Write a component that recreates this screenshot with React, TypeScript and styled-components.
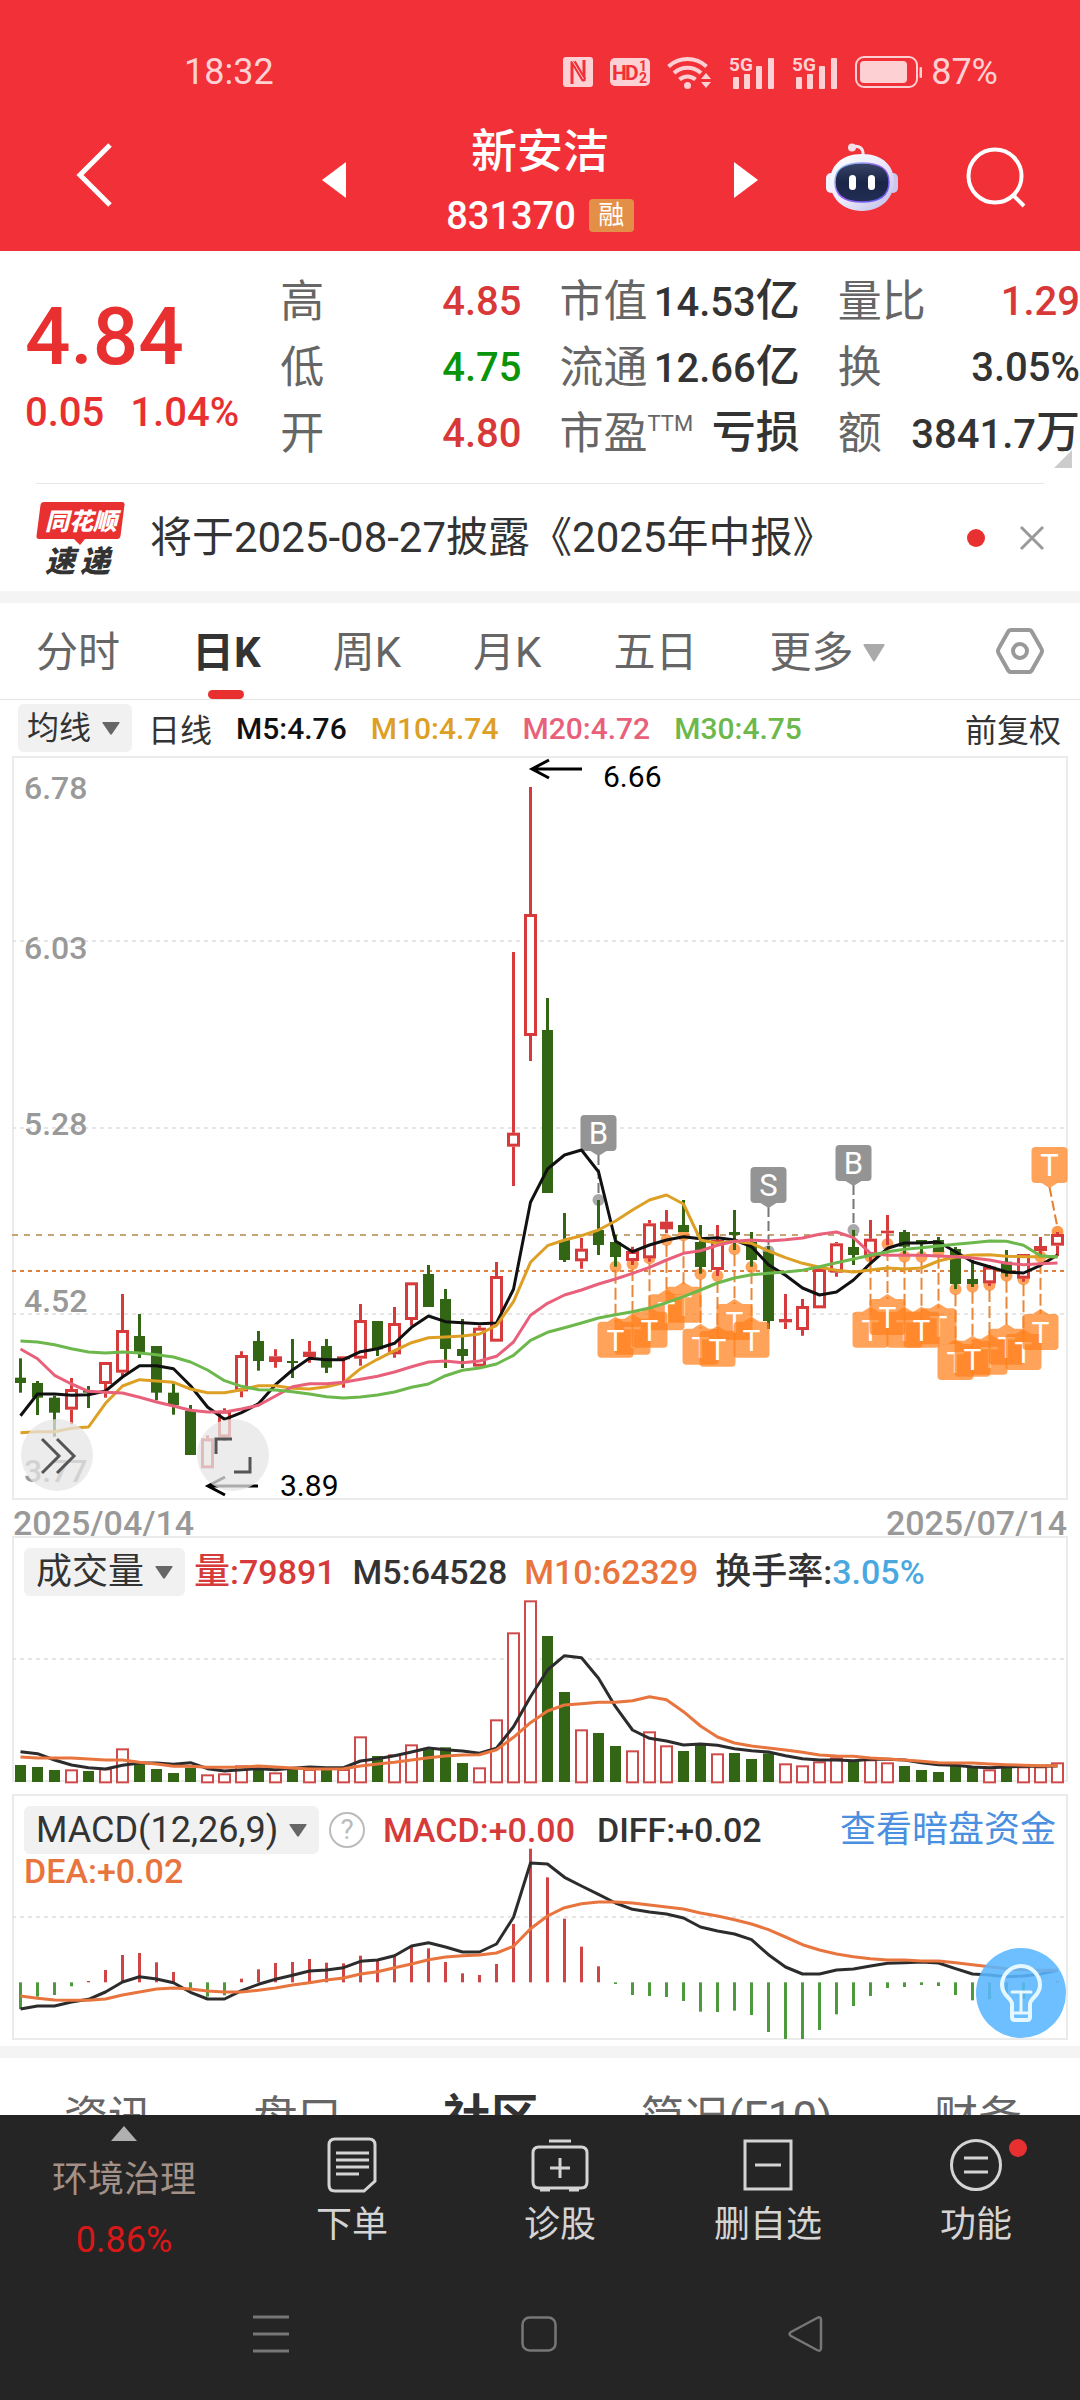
import React from "react";
import styled, { createGlobalStyle, css } from "styled-components";

const GlobalStyle = createGlobalStyle`
  *, *::before, *::after { box-sizing: border-box; }
  body {
    margin: 0;
    background: #fff;
    color: #333;
    font-family: Roboto, "Noto Sans CJK SC", sans-serif;
  }
  button, select {
    margin: 0;
    padding: 0;
    border: 0;
    background: none;
    color: inherit;
    font: inherit;
  }
  button { cursor: pointer; }
  a { color: inherit; text-decoration: none; }
  svg { display: block; overflow: visible; }
  dl, dt, dd, p, h1 { margin: 0; }
`;

/* ---------- palette ---------- */

const RED = "#e83030";
const CANDLE_RED = "#d63a3a";
const GREEN = "#326614";
const GOLD = "#dd9f24";
const PINK = "#e8607a";
const LIME = "#6cb84c";
const ORANGE = "#e8743e";
const MARK = "#ff801b";
const GREY = "#949494";

/* ---------- page frame ---------- */

const Screen = styled.div`
  display: flex;
  flex-direction: column;
  height: 100vh;
  overflow: hidden;
`;

const Main = styled.main`
  flex: 1;
  min-height: 0;
  overflow: hidden;
`;

const Band = styled.div`
  height: 12px;
  background: #f4f4f4;
`;

/* ---------- header ---------- */

const Header = styled.header`
  background: #f23038;
  color: #fff;
`;

const StatusBar = styled.div`
  display: flex;
  align-items: center;
  justify-content: space-between;
  height: 108px;
  padding: 36px 82px 0 184px;
  color: #fdd0d3;
  font-size: 36px;
  line-height: 36px;
`;

const StatusIcons = styled.div`
  display: flex;
  align-items: center;
  gap: 17px;
`;

const BatteryGroup = styled.div`
  display: flex;
  align-items: center;
  gap: 8px;
`;

const TitleBar = styled.div`
  display: grid;
  grid-template-columns: 1fr 436px 1fr;
  align-items: center;
  height: 143px;
`;

const TitleLeft = styled.div`
  padding: 0 0 6px 76px;
`;

const TitleRight = styled.div`
  display: flex;
  align-items: center;
  justify-content: flex-end;
  gap: 68px;
  padding: 0 54px 6px 0;
`;

const TitleCenter = styled.div`
  display: flex;
  align-items: center;
  justify-content: space-between;
`;

const TitleText = styled.div`
  padding-top: 6px;
`;

const StockName = styled.h1`
  font-size: 46px;
  font-weight: 500;
  line-height: 66px;
  text-align: center;
`;

const StockCode = styled.div`
  display: flex;
  align-items: center;
  gap: 13px;
  font-size: 38px;
  font-weight: 500;
  line-height: 64px;
`;

const MarginTag = styled.span`
  width: 45px;
  height: 33px;
  border-radius: 4px;
  background: #e48f48;
  font-size: 26px;
  font-weight: 400;
  line-height: 32px;
  text-align: center;
`;

/* ---------- quote ---------- */

const Quote = styled.section`
  position: relative;
  display: grid;
  grid-template-columns: 217fr 241fr 240fr 242fr;
  column-gap: 38px;
  padding: 18px 0 16px 25px;
`;

const PriceCol = styled.div`
  padding-top: 26px;
  color: ${RED};
  font-weight: 500;
  white-space: nowrap;
`;

const Price = styled.div`
  font-size: 80px;
  line-height: 84px;
`;

const Change = styled.div`
  display: flex;
  gap: 26px;
  padding-top: 10px;
  font-size: 40px;
  line-height: 48px;
`;

const Stats = styled.dl`
  display: flex;
  flex-direction: column;
`;

const Stat = styled.div`
  display: flex;
  align-items: center;
  justify-content: space-between;
  height: 66px;
  white-space: nowrap;
`;

const StatName = styled.dt`
  color: #666;
  font-size: 44px;
  line-height: 66px;
`;

const Sup = styled.sup`
  font-size: 22px;
  line-height: 22px;
  vertical-align: 18px;
`;

const StatValue = styled.dd<{ $color?: string }>`
  color: ${(p) => p.$color ?? "#333"};
  font-size: 40px;
  font-weight: 500;
  line-height: 66px;
`;

const Unit = styled.span`
  font-size: 44px;
`;

const Corner = styled.svg`
  position: absolute;
  right: 8px;
  bottom: 15px;
`;

/* ---------- news strip ---------- */

const News = styled.section`
  display: flex;
  align-items: center;
  height: 108px;
  margin: 0 36px;
  border-top: 1px solid #e8e8e8;
`;

const NewsText = styled.a`
  flex: 1;
  padding-left: 24px;
  font-size: 42px;
  line-height: 60px;
  white-space: nowrap;
`;

const Dot = styled.span`
  width: 18px;
  height: 18px;
  border-radius: 50%;
  background: ${RED};
`;

const CloseButton = styled.button`
  margin-left: 35px;
`;

/* ---------- tabs ---------- */

const TabRow = styled.nav`
  display: flex;
  align-items: center;
  gap: 72px;
  height: 97px;
  padding: 0 36px;
  border-bottom: 1px solid #e4e4e4;
`;

const Tab = styled.button<{ $active?: boolean }>`
  position: relative;
  display: flex;
  align-items: center;
  gap: 10px;
  height: 96px;
  padding-top: 4px;
  color: #666;
  font-size: 42px;
  line-height: 60px;
  ${(p) =>
    p.$active &&
    css`
      color: #333;
      font-weight: 700;
      &::after {
        content: "";
        position: absolute;
        left: 50%;
        bottom: 0;
        width: 36px;
        height: 9px;
        margin-left: -18px;
        border-radius: 5px;
        background: ${RED};
      }
    `}
`;

const SettingsButton = styled.button`
  margin-left: auto;
`;

/* ---------- indicator rows ---------- */

const Readout = styled.span<{ $color?: string }>`
  color: ${(p) => p.$color ?? "#333"};
  white-space: nowrap;
`;

const MaRow = styled.div`
  display: flex;
  align-items: center;
  gap: 24px;
  height: 56px;
  padding: 0 19px 0 18px;
  font-size: 30px;
  font-weight: 500;
`;

const MaText = styled.span`
  font-size: 32px;
  font-weight: 400;
`;

const Adjust = styled.button`
  margin-left: auto;
  font-size: 32px;
  font-weight: 400;
`;

const Picker = styled.label<{ $size: number }>`
  display: flex;
  align-items: center;
  gap: 10px;
  height: 48px;
  padding: 0 12px 0 ${(p) => (p.$size === 32 ? 9 : 12)}px;
  margin-right: -8px;
  border-radius: 6px;
  background: #f1f1f1;
  font-size: ${(p) => p.$size}px;
  font-weight: 400;
  select {
    appearance: none;
    line-height: 48px;
  }
`;

/* ---------- chart panels ---------- */

const Panel = styled.section`
  position: relative;
  display: grid;
  margin: 0 12px;
  > * { grid-area: 1 / 1; }
`;

const PanelChart = styled.svg`
  width: 100%;
  height: auto;
  font-family: Roboto, "Noto Sans CJK SC", sans-serif;
`;

const PanelHead = styled.div<{ $gap: number }>`
  z-index: 1;
  display: flex;
  flex-wrap: wrap;
  align-content: flex-start;
  align-items: center;
  column-gap: ${(p) => p.$gap}px;
  padding: 12px 12px 0;
  font-size: 34px;
  line-height: 34px;
  font-weight: 500;
`;

const Cn = styled.span`
  font-size: 36px;
`;

const DarkLink = styled.a`
  margin-left: auto;
  color: #4a8fe0;
  font-size: 36px;
  font-weight: 400;
`;

const HelpButton = styled.button`
  width: 36px;
  height: 36px;
  margin: 0 -4px;
  border: 2px solid #bbb;
  border-radius: 50%;
  color: #bbb;
  font-size: 28px;
  line-height: 32px;
  font-weight: 400;
`;

const Dates = styled.div`
  display: flex;
  justify-content: space-between;
  height: 36px;
  padding: 10px 13px 0;
  color: #999;
  font-size: 34px;
  line-height: 27px;
  font-weight: 500;
`;

const RoundButton = styled.button<{ $left: number }>`
  position: absolute;
  left: ${(p) => p.$left}px;
  bottom: 9px;
  width: 72px;
  height: 72px;
  border-radius: 50%;
  background: rgba(230, 230, 230, 0.75);
`;

const TipButton = styled.button`
  position: absolute;
  right: 2px;
  bottom: 3px;
  width: 90px;
  height: 90px;
  border-radius: 50%;
  background: rgba(90, 182, 255, 0.88);
`;

const Spacer = styled.div<{ $h: number }>`
  height: ${(p) => p.$h}px;
`;

/* ---------- section tabs ---------- */

const SectionTabs = styled.nav`
  display: flex;
  align-items: center;
  justify-content: space-between;
  height: 120px;
  padding: 0 58px 0 64px;
`;

const SectionTab = styled.button<{ $active?: boolean }>`
  color: ${(p) => (p.$active ? "#333" : "#666")};
  font-size: ${(p) => (p.$active ? 48 : 44)}px;
  font-weight: ${(p) => (p.$active ? 700 : 400)};
  line-height: 64px;
`;

/* ---------- bottom bars ---------- */

const Footer = styled.footer`
  background: #252525;
  color: #d4d4d4;
`;

const Actions = styled.div`
  display: grid;
  grid-template-columns: 248fr repeat(4, 208fr);
  height: 153px;
`;

const Sector = styled.button`
  display: flex;
  flex-direction: column;
  align-items: center;
  padding-top: 11px;
  color: #a39188;
  font-size: 36px;
  line-height: 60px;
`;

const SectorName = styled.span`
  padding-top: 9px;
`;

const SectorChange = styled.span`
  color: #d81818;
`;

const Action = styled.button`
  display: flex;
  flex-direction: column;
  align-items: center;
  gap: 4px;
  padding-top: 22px;
  font-size: 36px;
  line-height: 56px;
`;

const IconWrap = styled.span`
  position: relative;
`;

const Badge = styled.span`
  position: absolute;
  top: 2px;
  right: -25px;
  width: 18px;
  height: 18px;
  border-radius: 50%;
  background: ${RED};
`;

const SystemBar = styled.div`
  display: flex;
  align-items: center;
  justify-content: space-between;
  height: 132px;
  padding: 0 256px 0 253px;
`;

/* ---------- icons ---------- */

const Caret = ({ w = 18, h = 13, color = "#666" }) => (
  <svg width={w} height={h} viewBox="0 0 18 13" preserveAspectRatio="none" aria-hidden>
    <path d="M1 0h16q1 0 .5 1L10 12q-1 1.500-2 0L.5 1Q0 0 1 0z" fill={color} />
  </svg>
);

const NfcIcon = () => (
  <svg width="30" height="30" viewBox="0 0 30 30" aria-hidden>
    <rect width="30" height="30" rx="3" fill="#fdd0d3" />
    <path
      d="M9 27V4.500L21 24V3"
      fill="none"
      stroke="#f23038"
      strokeWidth="3"
      strokeLinejoin="bevel"
    />
    <path d="M10.500 5L21 23" stroke="#f23038" strokeWidth="5" />
    <path d="M9.500 4l11 18" stroke="#fdd0d3" strokeWidth="1" />
  </svg>
);

const HdIcon = () => (
  <svg width="40" height="28" viewBox="0 0 40 28" aria-hidden>
    <rect width="40" height="28" rx="5" fill="#fdd0d3" />
    <g fill="#f23038" fontFamily="Roboto" fontWeight="700">
      <text x="2" y="22" fontSize="21">H</text>
      <text x="15" y="22" fontSize="21">D</text>
      <text x="29" y="13" fontSize="14">1</text>
      <text x="29" y="25" fontSize="14">2</text>
    </g>
  </svg>
);

const WifiIcon = () => (
  <svg width="45" height="36" viewBox="0 0 45 36" aria-hidden>
    <g fill="none" stroke="#fdd0d3" strokeWidth="4">
      <path d="M1.500 12.500a28 28 0 0 1 38 0" />
      <path d="M7 19a20 20 0 0 1 27 0" />
      <path d="M12.500 25.500a12 12 0 0 1 16 0" />
    </g>
    <circle cx="20.500" cy="31.500" r="3.500" fill="#fdd0d3" />
    <path d="M34 25l5-6 5 6zM34 28l5 6 5-6z" fill="#fdd0d3" />
  </svg>
);

const SignalIcon = () => (
  <svg width="46" height="34" viewBox="0 0 46 34" aria-hidden>
    <text x="0" y="16" fill="#fdd0d3" fontFamily="Roboto" fontSize="19" fontWeight="700">5G</text>
    <g fill="#fdd0d3">
      <rect x="4" y="22" width="6" height="12" rx="1" />
      <rect x="15" y="19" width="6" height="15" rx="1" />
      <rect x="27" y="11" width="6" height="23" rx="1" />
      <rect x="39" y="3" width="6" height="31" rx="1" />
    </g>
  </svg>
);

const BatteryIcon = () => (
  <svg width="68" height="32" viewBox="0 0 68 32" aria-hidden>
    <rect x="1" y="1" width="61" height="30" rx="8" fill="none" stroke="#fdd0d3" strokeWidth="2" />
    <rect x="5" y="5" width="47" height="22" rx="4" fill="#fdd0d3" />
    <rect x="64.500" y="11" width="2.500" height="11" rx="1" fill="#fdd0d3" />
  </svg>
);

const BackIcon = () => (
  <svg width="38" height="66" viewBox="0 0 38 66" aria-hidden>
    <path d="M34 3L4 33l30 30" fill="none" stroke="#fff" strokeWidth="5" />
  </svg>
);

const StepIcon = ({ next = false }) => (
  <svg width="24" height="36" viewBox="0 0 24 36" aria-hidden>
    <path d={next ? "M0 0v36l24-18z" : "M24 0v36L0 18z"} fill="#fff" />
  </svg>
);

const RobotIcon = () => (
  <svg width="72" height="68" viewBox="0 0 72 68" aria-hidden>
    <defs>
      <linearGradient id="shell" x1="0" y1="0" x2="1" y2="1">
        <stop offset="0" stopColor="#ffffff" />
        <stop offset="0.500" stopColor="#eceafb" />
        <stop offset="1" stopColor="#bdb9e6" />
      </linearGradient>
      <linearGradient id="rim" x1="0" y1="0" x2="1" y2="1">
        <stop offset="0" stopColor="#8fd8f5" />
        <stop offset="0.500" stopColor="#9a5cf0" />
        <stop offset="1" stopColor="#5b5ff0" />
      </linearGradient>
      <linearGradient id="visor" x1="0" y1="0" x2="0" y2="1">
        <stop offset="0" stopColor="#3a4468" />
        <stop offset="0.500" stopColor="#1b2547" />
        <stop offset="1" stopColor="#222e55" />
      </linearGradient>
    </defs>
    <path d="M26 4c7-2 12 1 11 9" fill="none" stroke="#f3e6f3" strokeWidth="3" />
    <circle cx="26" cy="4.500" r="4" fill="#f6dfe8" />
    <rect x="0" y="30" width="10" height="20" rx="5" fill="#f2f0fd" />
    <rect x="62" y="30" width="10" height="20" rx="5" fill="#cdc6ee" />
    <path d="M36 11c22 0 32 13 32 28S56 68 36 68 4 54 4 39s10-28 32-28z" fill="url(#shell)" />
    <path
      d="M36 20c20 0 27 7 27 19s-7 20-27 20S9 51 9 39s7-19 27-19z"
      fill="url(#visor)"
      stroke="url(#rim)"
      strokeWidth="1.500"
    />
    <rect x="23" y="32" width="7" height="15" rx="3.500" fill="#fff" />
    <rect x="42" y="32" width="7" height="15" rx="3.500" fill="#fff" />
  </svg>
);

const SearchIcon = () => (
  <svg width="60" height="62" viewBox="0 0 60 62" aria-hidden>
    <circle cx="29" cy="30" r="26.500" fill="none" stroke="#fff" strokeWidth="4" />
    <path d="M47 49l11 11" stroke="#fff" strokeWidth="4" />
  </svg>
);

const BrandLogo = () => (
  <svg width="90" height="74" viewBox="0 0 90 74" role="img" aria-label="同花顺速递">
    <path
      d="M8 1h78q3 0 2.500 3l-4 31q-.5 3-3.500 3H49l-5 6-6-6H3q-3 0-2.500-3l4-31Q5 1 8 1z"
      fill={RED}
    />
    <g fontFamily='"Noto Sans CJK SC", sans-serif' fontWeight="900" fontStyle="italic">
      <text x="9" y="29" fontSize="24" fill="#fff">同花顺</text>
      <text x="9" y="71" fontSize="30" fill="#333">速</text>
      <text x="44" y="71" fontSize="30" fill="#333">递</text>
    </g>
  </svg>
);

const CloseIcon = () => (
  <svg width="24" height="24" viewBox="0 0 24 24" aria-hidden>
    <path d="M1 1l22 22M23 1L1 23" stroke="#999" strokeWidth="3" />
  </svg>
);

const HexIcon = () => (
  <svg width="48" height="46" viewBox="0 0 48 46" aria-hidden>
    <path
      d="M15 2h18q2 0 3 2l9 16q2 3 0 6l-9 16q-1 2-3 2H15q-2 0-3-2L3 26q-2-3 0-6l9-16q1-2 3-2z"
      fill="none"
      stroke="#999"
      strokeWidth="4"
    />
    <circle cx="24" cy="23" r="7" fill="none" stroke="#999" strokeWidth="4" />
  </svg>
);

const OrderIcon = () => (
  <svg width="50" height="56" viewBox="0 0 50 56" aria-hidden>
    <g fill="none" stroke="#d4d4d4" strokeWidth="3">
      <path d="M8 2h34q6 0 6 6v36L37 54H8q-6 0-6-6V8q0-6 6-6z" />
      <path d="M9 16h33M9 23h33M9 30h33M9 37h23" />
    </g>
  </svg>
);

const ClinicIcon = () => (
  <svg width="58" height="56" viewBox="0 0 58 56" aria-hidden>
    <g fill="none" stroke="#d4d4d4" strokeWidth="3">
      <path d="M18 4h22M8 10h42q6 0 6 6v29q0 6-6 6H8q-6 0-6-6V16q0-6 6-6zM29 21v20M19 31h20" />
      <path d="M9 53h10M38 53h10" />
    </g>
  </svg>
);

const RemoveIcon = () => (
  <svg width="50" height="56" viewBox="0 0 50 56" aria-hidden>
    <path d="M2 4h46v48H2zM12 28h26" fill="none" stroke="#d4d4d4" strokeWidth="3" />
  </svg>
);

const MoreIcon = () => (
  <svg width="52" height="56" viewBox="0 0 52 56" aria-hidden>
    <g fill="none" stroke="#d4d4d4" strokeWidth="3">
      <circle cx="26" cy="28" r="24.500" />
      <path d="M14 21h24M14 35h24" />
    </g>
  </svg>
);

/* ---------- chart data ----------
   One slot per trading day. Heights are in thirds of a chart unit,
   measured from the origin line of each panel. */

const slot = (i: number) => 8.5 + 17 * i;

type Candle = [up: 0 | 1, high: number, top: number, bottom: number, low: number];

const CANDLES: Candle[] = [
  [0, 835, 893, 909, 938], [0, 903, 909, 953, 1005], [0, 947, 953, 998, 1070], [1, 894, 927, 989, 1033],
  [0, 918, 932, 938, 984], [1, 846, 846, 912, 953], [1, 642, 750, 878, 890], [0, 702, 768, 820, 834],
  [0, 798, 798, 938, 961], [0, 910, 938, 976, 1004], [0, 975, 992, 1125, 1125], [1, 1066, 1075, 1165, 1165],
  [1, 985, 992, 1072, 1083], [1, 814, 825, 934, 952], [0, 753, 783, 843, 872], [1, 808, 829, 846, 863],
  [0, 777, 843, 849, 894], [1, 783, 815, 831, 848], [0, 777, 798, 863, 879], [1, 829, 829, 838, 923],
  [1, 672, 720, 836, 857], [0, 723, 723, 808, 828], [1, 681, 729, 823, 833], [1, 607, 607, 720, 737],
  [0, 555, 582, 681, 681], [0, 627, 657, 807, 864], [0, 717, 807, 828, 864], [1, 737, 743, 860, 860],
  [1, 546, 588, 785, 785], [1, -384, 158, 200, 318], [1, -879, -498, -132, -57], [0, -246, -150, 339, 339],
  [0, 399, 480, 540, 546], [1, 474, 506, 544, 566], [0, 360, 450, 495, 525], [0, 465, 486, 531, 560],
  [1, 500, 513, 543, 555], [1, 420, 430, 535, 545], [1, 390, 425, 448, 460], [0, 360, 435, 456, 456],
  [0, 435, 486, 561, 581], [1, 435, 480, 570, 588], [0, 390, 456, 465, 510], [0, 456, 486, 540, 560],
  [0, 498, 515, 723, 747], [1, 642, 717, 727, 747], [1, 657, 678, 750, 767], [1, 560, 567, 685, 685],
  [1, 486, 490, 578, 590], [0, 450, 501, 525, 555], [1, 420, 476, 530, 545], [1, 405, 452, 460, 495],
  [0, 450, 456, 500, 525], [0, 480, 480, 490, 525], [0, 471, 480, 516, 516], [0, 501, 507, 612, 627],
  [0, 540, 597, 612, 621], [1, 555, 560, 610, 618], [0, 510, 545, 580, 590], [1, 522, 522, 596, 605],
  [1, 471, 498, 513, 530], [1, 456, 462, 497, 528],
];

const M5 = [1007, 942, 942, 946, 944, 933, 891, 857, 857, 866, 917, 981, 1018, 998, 971, 914, 870, 835, 839, 839, 815, 806, 790, 742, 708, 725, 728, 731, 729, 628, 367, 267, 225, 210, 275, 483, 515, 495, 480, 470, 476, 473, 480, 500, 554, 586, 624, 645, 636, 600, 550, 505, 489, 489, 486, 515, 545, 560, 576, 579, 556, 525];
const M10 = [1058, 1055, 1055, 1045, 1041, 970, 918, 899, 903, 907, 927, 938, 938, 929, 917, 917, 925, 927, 920, 908, 866, 838, 812, 788, 773, 771, 768, 762, 736, 665, 547, 497, 480, 467, 450, 423, 390, 360, 345, 372, 480, 490, 484, 490, 513, 533, 550, 562, 571, 576, 570, 564, 567, 564, 543, 531, 525, 524, 529, 530, 530, 530];
const M20 = [807, 836, 886, 912, 934, 937, 939, 952, 966, 978, 991, 996, 996, 987, 976, 948, 920, 911, 911, 907, 898, 889, 876, 860, 846, 843, 848, 843, 829, 786, 706, 670, 645, 630, 612, 597, 580, 562, 540, 520, 512, 496, 484, 480, 483, 479, 474, 463, 456, 473, 520, 526, 526, 526, 528, 530, 534, 540, 550, 554, 551, 549];
const M30 = [783, 786, 794, 806, 816, 819, 816, 819, 824, 831, 846, 870, 902, 919, 929, 930, 935, 942, 950, 954, 951, 945, 936, 922, 912, 887, 871, 864, 852, 826, 781, 757, 743, 729, 714, 704, 695, 684, 668, 650, 630, 609, 594, 584, 580, 576, 571, 560, 548, 537, 526, 515, 508, 503, 498, 493, 488, 483, 484, 496, 527, 531];

const VOLUME = [705, 711, 720, 718, 723, 715, 655, 700, 717, 729, 713, 733, 730, 706, 718, 727, 718, 717, 718, 717, 619, 678, 673, 643, 658, 652, 699, 712, 568, 307, 211, 318, 486, 598, 609, 648, 661, 604, 646, 663, 645, 670, 669, 687, 670, 700, 706, 694, 682, 692, 688, 697, 708, 720, 726, 706, 712, 718, 712, 709, 709, 697];
const V5 = [665, 671, 690, 705, 713, 717, 706, 699, 699, 703, 698, 716, 723, 719, 716, 719, 715, 711, 713, 713, 693, 686, 677, 666, 654, 659, 663, 670, 655, 590, 500, 420, 377, 383, 445, 530, 600, 625, 633, 645, 642, 646, 656, 662, 666, 677, 686, 690, 690, 692, 688, 688, 690, 698, 704, 706, 711, 713, 711, 709, 709, 708];
const V10 = [681, 684, 684, 684, 687, 690, 690, 697, 702, 709, 709, 712, 712, 711, 708, 711, 714, 717, 717, 716, 708, 702, 697, 690, 683, 678, 675, 674, 659, 622, 578, 543, 525, 521, 517, 517, 512, 500, 509, 545, 588, 621, 639, 648, 654, 660, 667, 675, 678, 679, 684, 687, 690, 694, 698, 699, 699, 702, 704, 706, 707, 707];

const MACD = [1437, 1400, 1395, 1369, 1353, 1320, 1275, 1269, 1297, 1326, 1381, 1400, 1396, 1346, 1318, 1299, 1296, 1287, 1298, 1300, 1277, 1290, 1278, 1250, 1255, 1296, 1330, 1335, 1302, 1182, 956, 1042, 1166, 1250, 1309, 1362, 1395, 1398, 1401, 1413, 1445, 1446, 1442, 1455, 1506, 1527, 1527, 1500, 1453, 1428, 1398, 1374, 1371, 1365, 1368, 1395, 1411, 1408, 1400, 1406, 1370, 1353];
const DIFF = [1437, 1428, 1428, 1416, 1408, 1386, 1356, 1340, 1347, 1358, 1387, 1407, 1407, 1382, 1363, 1348, 1336, 1323, 1320, 1313, 1294, 1290, 1277, 1248, 1238, 1251, 1266, 1266, 1242, 1162, 999, 1002, 1042, 1068, 1093, 1119, 1138, 1146, 1152, 1164, 1191, 1203, 1212, 1229, 1274, 1311, 1332, 1332, 1320, 1317, 1308, 1300, 1298, 1296, 1299, 1316, 1332, 1335, 1340, 1338, 1332, 1321];
const DEA = [1398, 1405, 1410, 1411, 1411, 1407, 1395, 1386, 1377, 1374, 1377, 1383, 1386, 1386, 1381, 1374, 1365, 1358, 1350, 1344, 1332, 1325, 1313, 1302, 1289, 1281, 1277, 1275, 1269, 1249, 1196, 1158, 1133, 1121, 1116, 1116, 1119, 1125, 1131, 1137, 1149, 1158, 1169, 1182, 1199, 1221, 1244, 1260, 1272, 1280, 1286, 1290, 1290, 1293, 1293, 1298, 1304, 1310, 1316, 1319, 1321, 1321];

/* day, anchor height, top edge of the tag; later ones lie on top */
const T_MARKS: [number, number, number][] = [
  [36, 552, 716], [39, 466, 620], [38, 480, 643], [37, 535, 695], [35, 560, 725],
  [40, 582, 746], [42, 508, 672], [41, 588, 752], [43, 561, 725],
  [50, 530, 695], [52, 530, 695], [54, 515, 685], [51, 492, 657], [53, 530, 695],
  [55, 628, 792], [57, 615, 776], [58, 587, 746], [56, 620, 782], [59, 598, 762], [60, 530, 702],
];

const FLAGS: { day: number; letter: string; top: number; anchor: number; color: string; shift: number }[] = [
  { day: 34, letter: "B", top: 105, anchor: 360, color: GREY, shift: 0 },
  { day: 44, letter: "S", top: 261, anchor: 514, color: GREY, shift: 0 },
  { day: 49, letter: "B", top: 195, anchor: 450, color: GREY, shift: 0 },
  { day: 61, letter: "T", top: 201, anchor: 455, color: MARK, shift: -8 },
];

const SCALE: [string, number][] = [
  ["6.78", 43], ["6.03", 203], ["5.28", 379], ["4.52", 556], ["3.77", 726],
];

const line = (values: number[], y: (v: number) => number) =>
  values.map((v, i) => `${slot(i)},${y(v).toFixed(1)}`).join(" ");

function Trend({ values, y, color }: { values: number[]; y: (v: number) => number; color: string }) {
  return (
    <polyline points={line(values, y)} fill="none" stroke={color} strokeWidth="3" strokeLinejoin="round" />
  );
}

/* ---------- charts ---------- */

const py = (v: number) => 324 + v / 3;

function PriceChart() {
  return (
    <PanelChart viewBox="0 0 1056 744" role="img" aria-label="日K线图">
      <rect x="1" y="1" width="1054" height="742" fill="#fff" stroke="#ebebeb" strokeWidth="2" />
      <g stroke="#e6e6e6" strokeWidth="2" strokeDasharray="4 4">
        <path d="M0 185H1054M0 372H1054M0 558H1054" />
      </g>
      <path d="M0 479H1054" stroke="#c6a474" strokeWidth="2" strokeDasharray="6 6" />
      <path d="M0 515H1054" stroke="#df8040" strokeWidth="2" strokeDasharray="4 4" />

      <g fill="#999" fontSize="32" fontWeight="500">
        {SCALE.map(([t, y]) => (
          <text key={t} x="12" y={y}>{t}</text>
        ))}
      </g>

      {FLAGS.map((f) => (
        <circle key={f.day} cx={slot(f.day)} cy={py(f.anchor)} r="6" fill={f.color} opacity="0.800" />
      ))}
      {T_MARKS.map(([d, a]) => (
        <circle key={d} cx={slot(d)} cy={py(a)} r="6" fill={MARK} opacity="0.720" />
      ))}

      {CANDLES.map(([up, high, top, bottom, low], i) => {
        const x = slot(i);
        const height = (bottom - top) / 3;
        if (!up) {
          return (
            <g key={i} fill={GREEN}>
              <rect x={x - 1.5} y={py(high)} width="3" height={(low - high) / 3} />
              <rect x={x - 5.5} y={py(top)} width="11" height={Math.max(height, 2)} />
            </g>
          );
        }
        return (
          <g key={i} stroke={CANDLE_RED} strokeWidth="3">
            <path d={`M${x} ${py(high)}V${py(top)}M${x} ${py(bottom)}V${py(low)}`} />
            {height < 9 ? (
              <rect x={x - 6.5} y={py(top)} width="13" height={height} fill={CANDLE_RED} stroke="none" />
            ) : (
              <rect x={x - 5} y={py(top) + 1.5} width="10" height={height - 3} fill="#fff" />
            )}
          </g>
        );
      })}

      {FLAGS.map((f) => {
        const x = slot(f.day) + f.shift;
        const y = py(f.top);
        return (
          <g key={f.day}>
            <path
              d={`M${x} ${y + 40}L${slot(f.day)} ${py(f.anchor) - 4}`}
              stroke={f.color === GREY ? "#777" : "#e87f30"}
              strokeWidth="2"
              strokeDasharray="10 4"
            />
            <g fill={f.color} opacity={f.color === GREY ? 1 : 0.72}>
              <rect x={x - 18} y={y} width="36" height="36" rx="4" />
              <path d={`M${x - 8} ${y + 36}h16l-8 5z`} />
            </g>
            <text x={x} y={y + 29} fill="#fff" fontSize="31" textAnchor="middle">{f.letter}</text>
          </g>
        );
      })}

      {T_MARKS.map(([d, anchor, top]) => (
        <path
          key={d}
          d={`M${slot(d)} ${py(anchor) + 5}V${py(top)}`}
          stroke="#e8883c"
          strokeWidth="2"
          strokeDasharray="12 4"
        />
      ))}
      {T_MARKS.map(([d, , top]) => (
        <g key={d}>
          <g fill={MARK} opacity="0.720">
            <path
              d={`M${slot(d) - 14} ${py(top)}h6l8-5 8 5h6q4 0 4 4v28q0 4-4 4h-28q-4 0-4-4v-28q0-4 4-4z`}
            />
          </g>
          <text x={slot(d)} y={py(top) + 29} fill="#fff" fontSize="30" textAnchor="middle">T</text>
        </g>
      ))}

      <Trend values={M5} y={py} color="#111" />
      <Trend values={M10} y={py} color={GOLD} />
      <Trend values={M20} y={py} color={PINK} />
      <Trend values={M30} y={py} color={LIME} />

      <g fill="none" stroke="#000" strokeWidth="3">
        <path d="M570 13H520M537 4L520 13L537 22" />
        <path d="M246 730H196M213 721L196 730L213 739" />
      </g>
      <g fill="#000" fontSize="30">
        <text x="591" y="31">6.66</text>
        <text x="268" y="740">3.89</text>
      </g>
    </PanelChart>
  );
}

const vy = (v: number) => v / 3 - 6;

function VolumeChart() {
  return (
    <PanelChart viewBox="0 0 1056 248" role="img" aria-label="成交量图">
      <path d="M0 1H1055V245H1V1" fill="none" stroke="#ebebeb" strokeWidth="2" />
      <path d="M0 123H1054" stroke="#e6e6e6" strokeWidth="2" strokeDasharray="4 4" />
      {VOLUME.map((v, i) =>
        CANDLES[i][0] ? (
          <rect
            key={i}
            x={slot(i) - 5.5}
            y={vy(v) + 1}
            width="11"
            height={vy(757) - vy(v) - 1}
            fill="#fff"
            stroke="#cf4a4a"
            strokeWidth="2"
          />
        ) : (
          <rect key={i} x={slot(i) - 5.5} y={vy(v)} width="11" height={vy(756) - vy(v)} fill={GREEN} />
        )
      )}
      <Trend values={V5} y={vy} color="#2c2c2c" />
      <Trend values={V10} y={vy} color={ORANGE} />
    </PanelChart>
  );
}

const my = (v: number) => v / 3 - 264;
const MACD_ZERO = 1357;

function MacdChart() {
  return (
    <PanelChart viewBox="0 0 1056 247" role="img" aria-label="MACD图">
      <rect x="1" y="1" width="1054" height="244" fill="none" stroke="#ebebeb" strokeWidth="2" />
      <path d="M0 123H1054" stroke="#e6e6e6" strokeWidth="2" strokeDasharray="4 4" />
      {MACD.map((v, i) => (
        <path
          key={i}
          d={`M${slot(i)} ${my(MACD_ZERO)}V${my(v)}`}
          stroke={v < MACD_ZERO ? "#cf4444" : "#4c9a3c"}
          strokeWidth="3"
        />
      ))}
      <Trend values={DIFF} y={my} color="#2c2c2c" />
      <Trend values={DEA} y={my} color={ORANGE} />
    </PanelChart>
  );
}

/* ---------- page ---------- */

function IndicatorPicker({ name, value, size }: { name: string; value: string; size: number }) {
  return (
    <Picker $size={size}>
      <select aria-label={name} defaultValue={value}>
        <option>{value}</option>
      </select>
      <Caret />
    </Picker>
  );
}

export default function App() {
  return (
    <Screen>
      <GlobalStyle />
      <Header>
        <StatusBar>
          <span>18:32</span>
          <StatusIcons>
            <NfcIcon />
            <HdIcon />
            <WifiIcon />
            <SignalIcon />
            <SignalIcon />
            <BatteryGroup>
              <BatteryIcon />
              <span>87%</span>
            </BatteryGroup>
          </StatusIcons>
        </StatusBar>
        <TitleBar>
          <TitleLeft>
            <button aria-label="返回"><BackIcon /></button>
          </TitleLeft>
          <TitleCenter>
            <button aria-label="上一只"><StepIcon /></button>
            <TitleText>
              <StockName>新安洁</StockName>
              <StockCode>
                831370
                <MarginTag>融</MarginTag>
              </StockCode>
            </TitleText>
            <button aria-label="下一只"><StepIcon next /></button>
          </TitleCenter>
          <TitleRight>
            <button aria-label="智能助手"><RobotIcon /></button>
            <button aria-label="搜索"><SearchIcon /></button>
          </TitleRight>
        </TitleBar>
      </Header>

      <Main>
        <Quote>
          <PriceCol>
            <Price>4.84</Price>
            <Change>
              <span>0.05</span>
              <span>1.04%</span>
            </Change>
          </PriceCol>
          <Stats>
            <Stat><StatName>高</StatName><StatValue $color="#d83838">4.85</StatValue></Stat>
            <Stat><StatName>低</StatName><StatValue $color="#0a940a">4.75</StatValue></Stat>
            <Stat><StatName>开</StatName><StatValue $color="#d83838">4.80</StatValue></Stat>
          </Stats>
          <Stats>
            <Stat><StatName>市值</StatName><StatValue>14.53<Unit>亿</Unit></StatValue></Stat>
            <Stat><StatName>流通</StatName><StatValue>12.66<Unit>亿</Unit></StatValue></Stat>
            <Stat><StatName>市盈<Sup>TTM</Sup></StatName><StatValue><Unit>亏损</Unit></StatValue></Stat>
          </Stats>
          <Stats>
            <Stat><StatName>量比</StatName><StatValue $color="#d83838">1.29</StatValue></Stat>
            <Stat><StatName>换</StatName><StatValue>3.05%</StatValue></Stat>
            <Stat><StatName>额</StatName><StatValue>3841.7<Unit>万</Unit></StatValue></Stat>
          </Stats>
          <Corner width="18" height="18" viewBox="0 0 18 18" aria-hidden>
            <path d="M18 0v18H0z" fill="#ccc" />
          </Corner>
        </Quote>

        <News>
          <BrandLogo />
          <NewsText href="#report">将于2025-08-27披露《2025年中报》</NewsText>
          <Dot />
          <CloseButton aria-label="关闭"><CloseIcon /></CloseButton>
        </News>
        <Band />

        <TabRow>
          <Tab>分时</Tab>
          <Tab $active>日K</Tab>
          <Tab>周K</Tab>
          <Tab>月K</Tab>
          <Tab>五日</Tab>
          <Tab>更多<Caret w={22} h={18} color="#aaa" /></Tab>
          <SettingsButton aria-label="设置"><HexIcon /></SettingsButton>
        </TabRow>

        <MaRow>
          <IndicatorPicker name="主图指标" value="均线" size={32} />
          <MaText>日线</MaText>
          <Readout $color="#111">M5:4.76</Readout>
          <Readout $color={GOLD}>M10:4.74</Readout>
          <Readout $color={PINK}>M20:4.72</Readout>
          <Readout $color={LIME}>M30:4.75</Readout>
          <Adjust>前复权</Adjust>
        </MaRow>

        <Panel>
          <PriceChart />
          <RoundButton $left={9} aria-label="展开">
            <svg width="72" height="72" viewBox="0 0 72 72" aria-hidden>
              <path d="M21 20l17 17-17 17M36 20l17 17-17 17" fill="none" stroke="#555" strokeWidth="3" />
            </svg>
          </RoundButton>
          <RoundButton $left={185} aria-label="全屏">
            <svg width="72" height="72" viewBox="0 0 72 72" aria-hidden>
              <path d="M35 20H19v15M53 38v15H37" fill="none" stroke="#555" strokeWidth="3" />
            </svg>
          </RoundButton>
        </Panel>
        <Dates>
          <span>2025/04/14</span>
          <span>2025/07/14</span>
        </Dates>

        <Panel>
          <VolumeChart />
          <PanelHead $gap={17}>
            <IndicatorPicker name="副图指标一" value="成交量" size={36} />
            <Readout $color="#d63a3a"><Cn>量</Cn>:79891</Readout>
            <Readout>M5:64528</Readout>
            <Readout $color={ORANGE}>M10:62329</Readout>
            <Readout><Cn>换手率</Cn>:<Readout $color="#4aa8e0">3.05%</Readout></Readout>
          </PanelHead>
        </Panel>
        <Spacer $h={10} />

        <Panel>
          <MacdChart />
          <PanelHead $gap={22}>
            <IndicatorPicker name="副图指标二" value="MACD(12,26,9)" size={36} />
            <HelpButton aria-label="指标说明">?</HelpButton>
            <Readout $color="#d63a3a">MACD:+0.00</Readout>
            <Readout>DIFF:+0.02</Readout>
            <DarkLink href="#funds">查看暗盘资金</DarkLink>
            <Readout $color={ORANGE}>DEA:+0.02</Readout>
          </PanelHead>
          <TipButton aria-label="提示">
            <svg width="90" height="90" viewBox="0 0 90 90" aria-hidden>
              <g fill="none" stroke="#e6f8ff" strokeWidth="4" strokeLinejoin="round" strokeLinecap="round">
                <path d="M36 56c0-6-10-8-10-19a19 19 0 0 1 38 0c0 11-10 13-10 19v13q0 3-3 3H39q-3 0-3-3z" />
                <path d="M36 44h19M45 45v20M37 65h16" strokeWidth="3" />
              </g>
            </svg>
          </TipButton>
        </Panel>
        <Spacer $h={5} />
        <Band />

        <SectionTabs>
          <SectionTab>资讯</SectionTab>
          <SectionTab>盘口</SectionTab>
          <SectionTab $active>社区</SectionTab>
          <SectionTab>简况(F10)</SectionTab>
          <SectionTab>财务</SectionTab>
        </SectionTabs>
      </Main>

      <Footer>
        <Actions>
          <Sector>
            <svg width="26" height="15" viewBox="0 0 26 15" aria-hidden>
              <path d="M13 0l13 15H0z" fill="#b0b0b0" />
            </svg>
            <SectorName>环境治理</SectorName>
            <SectorChange>0.86%</SectorChange>
          </Sector>
          <Action><OrderIcon />下单</Action>
          <Action><ClinicIcon />诊股</Action>
          <Action><RemoveIcon />删自选</Action>
          <Action>
            <IconWrap><MoreIcon /><Badge /></IconWrap>
            功能
          </Action>
        </Actions>
        <SystemBar>
          <button aria-label="菜单">
            <svg width="36" height="38" viewBox="0 0 36 38" aria-hidden>
              <path d="M0 2h36M0 19h36M0 36h36" stroke="#777" strokeWidth="3" />
            </svg>
          </button>
          <button aria-label="主页">
            <svg width="36" height="38" viewBox="0 0 36 38" aria-hidden>
              <rect x="1.500" y="2.500" width="33" height="33" rx="7" fill="none" stroke="#777" strokeWidth="2.500" />
            </svg>
          </button>
          <button aria-label="后退">
            <svg width="36" height="38" viewBox="0 0 36 38" aria-hidden>
              <path
                d="M3 17L29 3q4-2 4 2v28q0 4-4 2L3 21q-3-2 0-4z"
                fill="none"
                stroke="#777"
                strokeWidth="2.500"
              />
            </svg>
          </button>
        </SystemBar>
      </Footer>
    </Screen>
  );
}
